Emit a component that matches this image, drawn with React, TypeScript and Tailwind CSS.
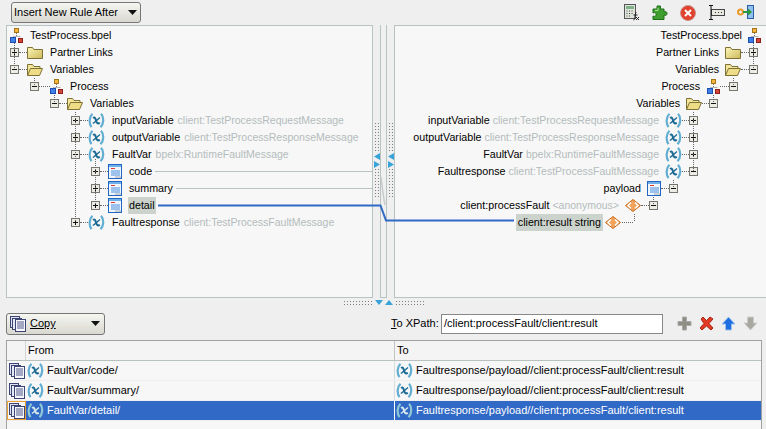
import React from "react";

function Proc() {
  return (
    <svg width="13" height="15" viewBox="0 0 13 15" className="shrink-0">
      <path d="M6.500 5v3M3 10V8.500h7V10" stroke="#777" strokeDasharray="1 1" fill="none" />
      <rect x="4.500" y="0.500" width="4" height="4" fill="#f5b53a" stroke="#a8741a" />
      <rect x="0.500" y="9.500" width="5" height="5" fill="#3f7fe8" stroke="#1f4fb0" />
      <rect x="8.500" y="10.500" width="4" height="4" fill="#d8443a" stroke="#8d2018" />
    </svg>
  );
}
function FolderClosed() {
  return (
    <svg width="16" height="14" viewBox="0 0 16 14" className="shrink-0">
      <defs>
        <linearGradient id="fc" x1="0" y1="0" x2="1" y2="1">
          <stop offset="0" stopColor="#fdf6b8" />
          <stop offset="1" stopColor="#cdb95c" />
        </linearGradient>
      </defs>
      <path d="M0.500 12.500V1.500h5l1.500 2h8.500v9z" fill="url(#fc)" stroke="#7d7136" />
    </svg>
  );
}
function FolderOpen() {
  return (
    <svg width="16" height="14" viewBox="0 0 16 14" className="shrink-0">
      <path d="M0.500 12.500V1.500h5l1.500 2h6v2.500" fill="#f3e69a" stroke="#7d7136" />
      <path d="M0.500 12.500l3-7h12l-3 7z" fill="#efdc86" stroke="#7d7136" />
    </svg>
  );
}
function VarIcon({ pale }: { pale?: boolean }) {
  return (
    <svg width="17" height="15" viewBox="0 0 17 15" className="shrink-0">
      <path d="M4.500 0.800C1.300 3.800 0.600 10 3.500 14.200" stroke={pale ? "#8fc8d4" : "#62aed2"} strokeWidth="2.200" fill="none" />
      <path d="M13 0.800c3.200 3.500 3 9.500-.5 13.400" stroke={pale ? "#8fc8d4" : "#62aed2"} strokeWidth="2.200" fill="none" />
      <path d="M5 5c2-1.200 2.500 0.500 3 2.500s1.500 3.800 3.800 2.300" stroke={pale ? "#d5e8ec" : "#1b6a94"} strokeWidth="2" fill="none" />
      <path d="M12 4.500C9.800 6 7.500 9 4.800 10.500" stroke={pale ? "#d5e8ec" : "#1b6a94"} strokeWidth="1.400" fill="none" />
    </svg>
  );
}
function DocIcon() {
  return (
    <svg width="14" height="15" viewBox="0 0 14 15" className="shrink-0">
      <rect x="0.500" y="0.500" width="13" height="14" fill="#eef5fc" stroke="#2266c4" />
      <rect x="1" y="1" width="12" height="2" fill="#6fb0ea" />
      <rect x="3" y="4" width="4" height="1" fill="#e03a2e" />
      <path d="M3 7h9M3 9h9M3 11h9" stroke="#4a8ede" />
      <path d="M7 13h6" stroke="#aaa" />
    </svg>
  );
}
function Diamond() {
  return (
    <svg width="16" height="13" viewBox="0 0 16 13" className="shrink-0">
      <path d="M8 0.500L15.500 6.500 8 12.500 0.500 6.500z" fill="#f3a35a" stroke="#c8691c" />
      <path d="M6 3.500L3 6.500l3 3M10 3.500l3 3-3 3" stroke="#fff" strokeWidth="1.500" fill="none" />
    </svg>
  );
}
function CopyIcon() {
  return (
    <svg width="16" height="16" viewBox="0 0 16 16" className="shrink-0">
      <rect x="0.500" y="0.500" width="9" height="11" fill="#dfe3f3" stroke="#3c4474" />
      <rect x="2.500" y="2.500" width="9" height="11" fill="#e6e9f6" stroke="#3c4474" />
      <rect x="5.500" y="3.500" width="10" height="12" fill="#f6f7fc" stroke="#3c4474" />
      <path d="M7 6h7M7 8h7M7 10h7M7 12h7" stroke="#50588c" />
    </svg>
  );
}
function Expander({ open }: { open?: boolean }) {
  return (
    <svg width="9" height="9" viewBox="0 0 9 9" className="shrink-0">
      <rect x="0.500" y="0.500" width="8" height="8" fill="#ecebe4" stroke="#77776f" />
      <path d="M2 4.500h5" stroke="#111" />
      {!open && <path d="M4.500 2v5" stroke="#111" />}
    </svg>
  );
}
function Dash({ w = 8 }: { w?: number }) {
  return <div className="shrink-0 border-t border-dotted border-[#666] h-0" style={{ width: w }} />;
}

type R = { x: number; e?: "o" | "c"; icon: React.ReactNode; t: string; s?: string; hl?: boolean; dash?: number; gap?: number };
const f = <FolderClosed />;
const o = <FolderOpen />;
const p = <Proc />;
const v = <VarIcon />;
const d = <DocIcon />;

const left: R[] = [
  { x: 3, icon: p, t: "TestProcess.bpel" },
  { x: 3, e: "c", icon: f, t: "Partner Links" },
  { x: 3, e: "o", icon: o, t: "Variables" },
  { x: 23, e: "o", icon: p, t: "Process", dash: 11 },
  { x: 43, e: "o", icon: o, t: "Variables" },
  { x: 64, e: "c", icon: v, t: "inputVariable", s: "client:TestProcessRequestMessage" },
  { x: 64, e: "c", icon: v, t: "outputVariable", s: "client:TestProcessResponseMessage" },
  { x: 64, e: "o", icon: v, t: "FaultVar", s: "bpelx:RuntimeFaultMessage" },
  { x: 84, e: "c", icon: d, t: "code" },
  { x: 84, e: "c", icon: d, t: "summary" },
  { x: 84, e: "c", icon: d, t: "detail", hl: true },
  { x: 64, e: "c", icon: v, t: "Faultresponse", s: "client:TestProcessFaultMessage" },
];
const right: R[] = [
  { x: 5, icon: p, t: "TestProcess.bpel" },
  { x: 8, e: "c", icon: f, t: "Partner Links" },
  { x: 8, e: "o", icon: o, t: "Variables" },
  { x: 28, e: "o", icon: p, t: "Process", dash: 9, gap: 7 },
  { x: 48, e: "o", icon: o, t: "Variables", dash: 7 },
  { x: 68, e: "c", icon: v, t: "inputVariable", s: "client:TestProcessRequestMessage", dash: 7 },
  { x: 68, e: "c", icon: v, t: "outputVariable", s: "client:TestProcessResponseMessage", dash: 7 },
  { x: 68, e: "c", icon: v, t: "FaultVar", s: "bpelx:RuntimeFaultMessage", dash: 7 },
  { x: 68, e: "o", icon: v, t: "Faultresponse", s: "client:TestProcessFaultMessage", dash: 7 },
  { x: 88, e: "o", icon: d, t: "payload" },
  { x: 108, e: "o", icon: <Diamond />, t: "client:processFault", s: "<anonymous>" },
];

function LeftRow({ r }: { r: R }) {
  return (
    <div className="h-[17px] flex items-center" style={{ paddingLeft: r.x }}>
      {r.e ? (
        <>
          <Expander open={r.e === "o"} />
          <Dash w={r.dash ?? 8} />
        </>
      ) : null}
      {r.icon}
      <span className={`ml-[6px] px-px leading-[17px] whitespace-nowrap text-[10.7px] ${r.hl ? "bg-[#ccd3cc]" : ""}`}>{r.t}</span>
      {r.s && <span className="ml-[3px] text-[10.5px] text-[#b4bcbc] whitespace-nowrap">{r.s}</span>}
    </div>
  );
}
function RightRow({ r }: { r: R }) {
  return (
    <div className="h-[17px] flex items-center justify-end" style={{ paddingRight: r.x }}>
      <span className="leading-[17px] whitespace-nowrap text-[10.7px]">{r.t}</span>
      {r.s && <span className="ml-[3px] text-[10.5px] text-[#b4bcbc] whitespace-nowrap">{r.s}</span>}
      <div className="shrink-0" style={{ width: r.gap ?? 6 }} />
      {r.icon}
      {r.e ? (
        <>
          <Dash w={r.dash ?? 8} />
          <Expander open={r.e === "o"} />
        </>
      ) : null}
    </div>
  );
}

function Dots({ className }: { className: string }) {
  return <div className={`bg-[radial-gradient(circle,#808080_0.7px,transparent_0.9px)] bg-[length:3px_3px] ${className}`} />;
}
function Tri({ dir }: { dir: "l" | "r" | "d" | "u" }) {
  const pts = { l: "6,0 6,7 0,3.500", r: "0,0 0,7 6,3.500", d: "0,0 8,0 4,5", u: "4,0 8,5 0,5" }[dir];
  const w = dir === "d" || dir === "u" ? 8 : 6;
  const h = dir === "d" || dir === "u" ? 5 : 7;
  return (
    <svg width={w} height={h} viewBox={`0 0 ${w} ${h}`} className="shrink-0">
      <polygon points={pts} fill="#38a3d8" />
    </svg>
  );
}
function SideHandle() {
  return (
    <div className="w-[7px] h-full flex flex-col items-center">
      <div className="h-[97px]" />
      <Dots className="w-[6px] h-[31px]" />
      <div className="flex flex-col gap-px">
        <Tri dir="l" />
        <Tri dir="r" />
      </div>
      <Dots className="w-[6px] h-[31px]" />
    </div>
  );
}
function Caret() {
  return (
    <svg width="9" height="5" viewBox="0 0 9 5" className="shrink-0">
      <polygon points="0,0 9,0 4.500,5" fill="#111" />
    </svg>
  );
}
function Row({ text, target, sel }: { text: string; target: string; sel?: boolean }) {
  return (
    <div className={`h-[20px] flex border-b border-[#efefef] ${sel ? "" : "bg-[#f7f7f7]"}`}>
      <div className={`w-[19px] shrink-0 flex items-center justify-center ${sel ? "border border-[#eaa035]" : ""}`}>
        <CopyIcon />
      </div>
      <div className={`w-[368px] flex items-center gap-[3px] pl-px ${sel ? "bg-[#3169c6] text-white" : ""}`}>
        <VarIcon pale={sel} />
        <span className="whitespace-nowrap">{text}</span>
      </div>
      <div className={`flex-1 flex items-center gap-[2px] pl-[1px] border-l ${sel ? "bg-[#3169c6] text-white border-white" : "border-[#d8dcdc]"}`}>
        <VarIcon pale={sel} />
        <span className="ml-px whitespace-nowrap">{target}</span>
      </div>
    </div>
  );
}

export default function App() {
  return (
    <div className="relative w-[766px] h-[429px] overflow-hidden bg-[#efefef] text-[11px] text-black font-['Liberation_Sans',Arial,sans-serif] flex flex-col">
      <div className="h-[25px] flex items-center pl-[11px] pr-[12px] justify-between shrink-0">
        <div className="w-[130px] h-[21px] border border-[#777] rounded-[3px] bg-gradient-to-b from-[#f7f7f2] to-[#d8d8d0] flex items-center justify-between pl-[2px] pr-[3px]">
          <span>Insert New Rule After</span>
          <Caret />
        </div>
        <div className="flex items-center gap-[12px]">
          <svg width="16" height="17" viewBox="0 0 16 17">
            <rect x="0.500" y="0.500" width="11" height="14" fill="#dfe5da" stroke="#555" />
            <rect x="2" y="2" width="8" height="3" fill="#7fb38a" />
            <path d="M2.500 7h1M5 7h1M7.500 7h1M2.500 9.500h1M5 9.500h1M7.500 9.500h1M2.500 12h1M5 12h1" stroke="#444" />
            <path d="M9.500 16c2 0 1-7 3-8M9.500 11h4M12 13l3 3M15 13l-3 3" stroke="#222" fill="none" />
          </svg>
          <svg width="16" height="16" viewBox="0 0 16 16">
            <path d="M5 1h3.500v3H12v3c2-1 3 0 3 1.500S14 11 12 10v4.500H1V11c2 1 3 0 3-1.500S3 7 1 8V4h4z" fill="#3f9e2e" stroke="#1f6f1a" />
            <path d="M6 3v2.500H3" stroke="#a5e58a" fill="none" />
          </svg>
          <svg width="16" height="16" viewBox="0 0 16 16">
            <circle cx="8" cy="8" r="7.500" fill="#e2412d" stroke="#c8968a" />
            <path d="M5 5l6 6M11 5l-6 6" stroke="#fff" strokeWidth="2" />
          </svg>
          <svg width="17" height="15" viewBox="0 0 17 15">
            <rect x="3.500" y="4.500" width="13" height="6" fill="#e8e8e0" stroke="#444" />
            <path d="M7 7.500h1M10 7.500h1M13 7.500h1" stroke="#333" />
            <path d="M1 0.500h4M1 14.500h4M3 0.500v14" stroke="#111" />
          </svg>
          <svg width="17" height="15" viewBox="0 0 17 15">
            <rect x="10.500" y="0.500" width="6" height="13" fill="#8fc0ee" stroke="#2c5ca8" />
            <circle cx="3.500" cy="7" r="2.500" fill="none" stroke="#e89a2a" strokeWidth="2" />
            <path d="M6 7h8" stroke="#2c9a3a" strokeWidth="2" />
            <path d="M11 3.500L15 7l-4 3.500z" fill="#2c9a3a" />
          </svg>
        </div>
      </div>

      <div className="h-[273px] flex pl-[6px] shrink-0">
        <div className="w-[367px] border border-[#b8c4c4] bg-[#f7f7f7] pt-px">
          {left.map((r, i) => (
            <LeftRow key={i} r={r} />
          ))}
        </div>
        <SideHandle />
        <div className="w-[7px] border-x border-b border-[#b8c4c4] bg-[#f0f0f0]" />
        <SideHandle />
        <div className="flex-1 border-y border-l border-[#b8c4c4] bg-[#f7f7f7] pt-px">
          {right.map((r, i) => (
            <RightRow key={i} r={r} />
          ))}
          <div className="h-[17px] flex items-center justify-end pr-[145px]">
            <span className="bg-[#ccd3cc] px-[2px] leading-[17px] whitespace-nowrap text-[10.7px]">client:result string</span>
            <span className="ml-[2px]"><Diamond /></span>
          </div>
        </div>
      </div>

      <div className="h-[6px] flex items-center justify-center shrink-0 gap-[2px] mt-px pl-[2px]">
        <Dots className="w-[30px] h-[5px]" />
        <Tri dir="d" />
        <Tri dir="u" />
        <Dots className="w-[30px] h-[5px]" />
      </div>

      <div className="h-[35px] flex items-center pl-[6px] pr-[8px] shrink-0 pt-[2px]">
        <div className="w-[99px] h-[22px] border border-[#777] rounded-[3px] bg-gradient-to-b from-[#f7f7f2] to-[#d8d8d0] flex items-center pl-[3px] pr-[4px]">
          <CopyIcon />
          <span className="ml-[4px] flex-1 underline underline-offset-1">Copy</span>
          <Caret />
        </div>
        <span className="ml-[286px] w-[50px] whitespace-nowrap"><span className="underline underline-offset-1">T</span>o XPath:</span>
        <div className="w-[222px] h-[20px] border border-[#888] bg-white flex items-center pl-[2px] whitespace-nowrap">
          /client:processFault/client:result
        </div>
        <div className="ml-[14px] flex items-center gap-[7px]">
          <svg width="15" height="15" viewBox="0 0 15 15">
            <path d="M5.500 1h4v4.500H14v4H9.500V14h-4V9.500H1v-4h4.500z" fill="#8d8d84" stroke="#aaa" />
          </svg>
          <svg width="15" height="15" viewBox="0 0 15 15">
            <path d="M2 3l2-2 3.500 3.500L11 1l3 2-4 4.500 4 4.500-2 2-4.500-4L3 14l-2-2 4-4.500z" fill="#e23a22" stroke="#a82a18" />
          </svg>
          <svg width="15" height="15" viewBox="0 0 15 15">
            <path d="M7.500 1L14 8h-3.500v6h-6V8H1z" fill="#1f6fe0" stroke="#9ac0ee" />
          </svg>
          <svg width="15" height="15" viewBox="0 0 15 15">
            <path d="M7.500 14L14 7h-3.500V1h-6v6H1z" fill="#a8a8a0" stroke="#ccc" />
          </svg>
        </div>
      </div>

      <div className="ml-[6px] mr-[4px] flex-1 border border-[#a0a0a0] border-b-0 bg-[#f7f7f7]">
        <div className="h-[20px] flex border-b border-[#b8c0c0] bg-[#f4f4f4]">
          <div className="w-[19px] border-r border-[#d0d4d4]" />
          <div className="w-[368px] flex items-center pl-[2px]">From</div>
          <div className="flex-1 flex items-center pl-[2px] border-l border-[#c0c4c4]">To</div>
        </div>
        <Row text="FaultVar/code/" target="Faultresponse/payload//client:processFault/client:result" />
        <Row text="FaultVar/summary/" target="Faultresponse/payload//client:processFault/client:result" />
        <Row text="FaultVar/detail/" target="Faultresponse/payload//client:processFault/client:result" sel />
      </div>

      <svg className="absolute left-0 top-0 pointer-events-none" width="766" height="429" viewBox="0 0 766 429">
        <path d="M155 171.500H373M176 188.500H373" stroke="#b8c4c4" />
        <path d="M381 177c1 8 2 18 4 28" stroke="#c8cccc" strokeWidth="1.500" fill="none" />
        <path d="M158 205.500H380.500L386 220.500H514" stroke="#3169c6" strokeWidth="2" fill="none" />
        <g stroke="#666" strokeDasharray="1 1" fill="none">
          <path d="M14.500 43v26M34.500 78v8M54.500 95v8M75.500 112v110M95.500 159v46" />
          <path d="M753.500 43v26M733.500 78v8M713.500 95v8M693.500 112v59M673.500 180v8M653.500 197v8M634.500 214v8M622 222.500h12" />
        </g>
      </svg>
    </div>
  );
}
